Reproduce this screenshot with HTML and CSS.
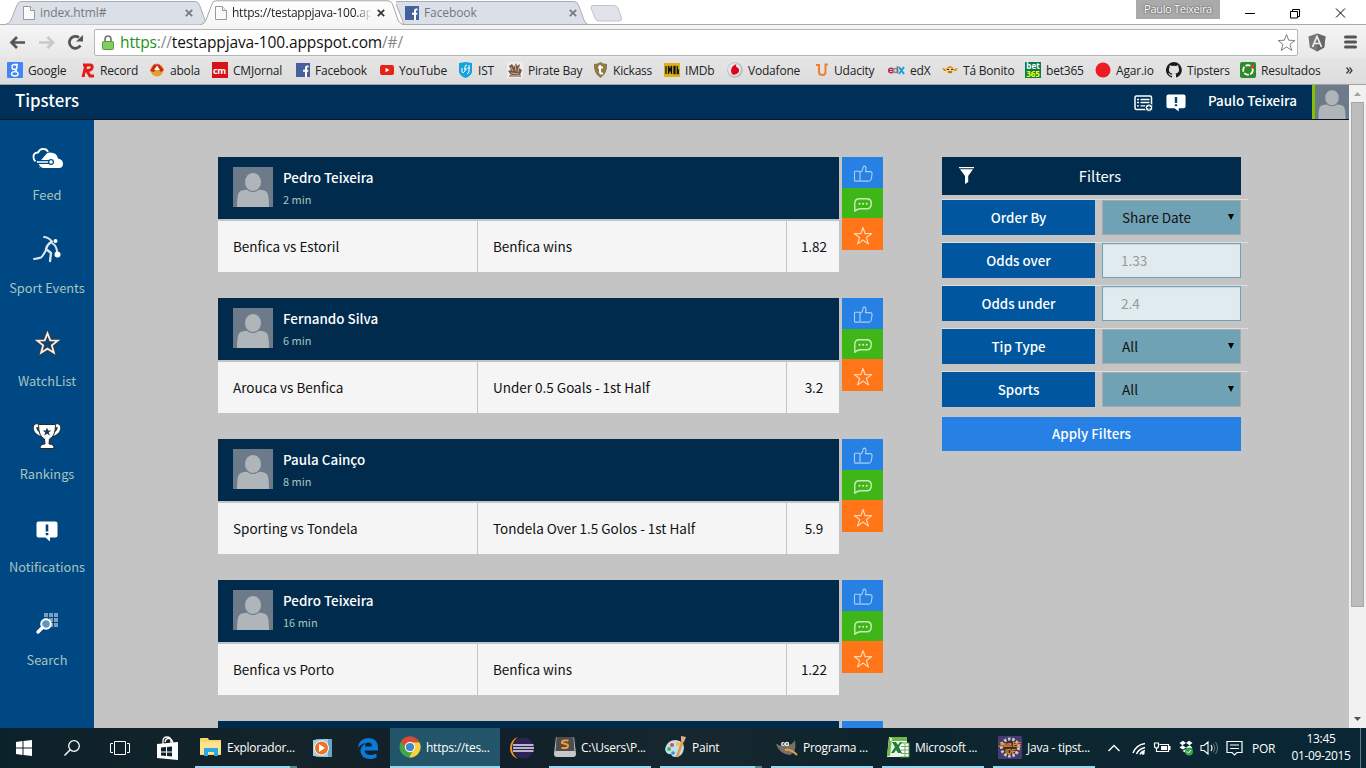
FILE: index.html
```html
<!DOCTYPE html>
<html lang="pt">
<head>
<meta charset="utf-8">
<title>Tipsters</title>
<link rel="stylesheet" href="styles.css">
</head>
<body>
<svg class="defs" width="0" height="0">
  <defs>
    <linearGradient id="activeTab" x2="0" y2="1"><stop offset="0" stop-color="#fff"/><stop offset="1" stop-color="#f6f6f6"/></linearGradient>
    <symbol id="page" viewBox="0 0 12 14"><path d="M.5.5h7l4 4v9H.5z" fill="#fafafa" stroke="#999"/><path d="M7.500.5v4h4" fill="#eee" stroke="#999"/></symbol>
    <symbol id="close" viewBox="0 0 8 8"><path d="M.8.800l6.400 6.400M7.200.800L.8 7.200" stroke="currentColor" stroke-width="1.700"/></symbol>
    <symbol id="fb" viewBox="0 0 14 14"><rect width="14" height="14" fill="#44619d"/><path d="M12.500 3.600h-1.300q-1.200 0-1.200 1.200v9.200M7 7.800h5.300" stroke="#fff" stroke-width="2" fill="none"/></symbol>
    <symbol id="avatar" viewBox="0 0 40 40"><rect width="40" height="40" fill="#6c7a89"/><path d="M4 40q0-12 2-14.500Q8 23 14 22.800q6 4 12 0 6 .2 8 2.700 2 2.500 2 14.500z" fill="#b0b5b9"/><ellipse cx="20" cy="15" rx="8.500" ry="9.500" fill="#b0b5b9" stroke="#6c7a89" stroke-width="1"/></symbol>
    <symbol id="like" viewBox="0 0 20 18"><g fill="none" stroke="#a9cff5" stroke-width="1.100" stroke-linejoin="round"><path d="M1.500 7q0-.8.8-.8H6q1 0 1 .8v8.200q0 .9-1 .9H2.300q-.8 0-.8-.9z"/><path d="M7.200 7.600q2.600-1.500 2.800-4.600 0-1.900 1.200-1.900 1.800 0 1.800 2.400 0 1.500-.6 3.100h5q1.700.2 1.700 2l-.8 5.400q-.4 2-2.400 2.100H7.200"/></g></symbol>
    <symbol id="chat" viewBox="0 0 20 16"><path d="M1.800 14.300V6.200q0-4.500 4.600-4.500h7.300q4.600 0 4.600 4.500 0 5.600-4.600 5.600H7q-2.800.2-5.200 2.500z" fill="none" stroke="#c8edba" stroke-width="1.400" stroke-linejoin="round"/><g fill="#d9f3cf"><circle cx="6.500" cy="6.700" r="1"/><circle cx="10.100" cy="6.700" r="1"/><circle cx="13.700" cy="6.700" r="1"/></g></symbol>
    <symbol id="star" viewBox="0 0 20 20"><path d="M10 1.500l2.100 6.200h6.500l-5.200 3.900 2 6.300L10 14l-5.400 3.900 2-6.300L1.400 7.700h6.500z" fill="none" stroke="currentColor" stroke-width="1.200" stroke-linejoin="round"/></symbol>
    <symbol id="notice" viewBox="0 0 22 21"><path d="M2.500.5h17q2 0 2 2v12q0 2-2 2h-5.500v4l-4.500-4H2.500q-2 0-2-2v-12q0-2 2-2z" fill="#fff"/><path d="M11 3.500v7" stroke="#00407a" stroke-width="2.600"/><rect x="9.700" y="12" width="2.600" height="2.200" fill="#00407a"/></symbol>
  </defs>
</svg>

<header class="browser">
  <div class="tabstrip">
    <div class="tab first">
      <svg class="tab-shape" width="204" height="25" viewBox="0 0 204 25"><path d="M0 24.500Q4.500 24 6 20L12 5Q13.500 1.500 16 1.500H190Q193 1.500 194.500 5L200 20Q201 23.500 204 24.500" fill="#dbe0e8" stroke="#a9acb2"/></svg>
      <div class="tab-body"><svg width="12" height="14"><use href="#page"/></svg><span>index.html#</span><svg class="x" width="8" height="8"><use href="#close"/></svg></div>
    </div>
    <div class="tab active">
      <svg class="tab-shape" width="204" height="25" viewBox="0 0 204 25"><path d="M0 25Q4.500 24 6 20L12 4Q13 .8 16 .8H188Q191 .8 192.500 4L198 20Q200 24 204 25" fill="url(#activeTab)" stroke="#a5a5a5"/></svg>
      <div class="tab-body"><svg width="12" height="14"><use href="#page"/></svg><span>https://testappjava-100.ap</span><svg class="x" width="8" height="8"><use href="#close"/></svg></div>
    </div>
    <div class="tab last">
      <svg class="tab-shape" width="192" height="25" viewBox="0 0 192 25"><path d="M0 1.500H178Q181 1.500 182.500 5L188 20Q189 23.500 192 24.500H8L0 4" fill="#dbe0e8" stroke="#a9acb2"/></svg>
      <div class="tab-body"><svg width="14" height="14"><use href="#fb"/></svg><span>Facebook</span><svg class="x" width="8" height="8"><use href="#close"/></svg></div>
    </div>
    <svg class="newtab" width="34" height="17" viewBox="0 0 34 17"><path d="M4 .5H25Q28 .5 29 3L32.500 13Q33 16 30 16H10Q7 16 6 13L2 3Q1.500.5 4 .5z" fill="#e0e4ea" stroke="#c0c4ca"/></svg>
    <span class="profile">Paulo Teixeira</span>
    <svg class="wincontrols" width="110" height="20" viewBox="0 0 110 20"><g fill="none" stroke="#000"><path d="M5 9.500H15M50.500 7.500h7v6.500h-7zM52.500 7.500v-2h7v7h-2M96 4.500l9 9M105 4.500l-9 9"/></g></svg>
  </div>
  <div class="toolbar">
    <svg class="navbuttons" width="90" height="26" viewBox="0 0 90 26"><path d="M25 13.500H12M17 8l-5.500 5.500L17 19" fill="none" stroke="#555" stroke-width="2.700"/><path d="M39 13.500H52M47.500 8l5.500 5.500-5.500 5.500" fill="none" stroke="#c9c9c9" stroke-width="2.700"/><path d="M80.500 16.500A6 6 0 1 1 79 8.500" fill="none" stroke="#555" stroke-width="2.700"/><path d="M83 6v6.500h-7z" fill="#555"/></svg>
    <div class="omnibox">
      <svg width="12" height="15" viewBox="0 0 12 15"><path d="M3 7V4.500Q3 1 6 1t3 3.500V7" fill="none" stroke="#777" stroke-width="1.700"/><rect x=".5" y="6.500" width="11" height="8" rx="1" fill="#83cc60" stroke="#4e9f3b"/></svg>
      <span class="url"><b>https</b><i>://</i>testappjava-100.appspot.com<i>/#/</i></span>
      <svg class="fav" width="19" height="19" viewBox="0 0 20 20"><path d="M10 1.500l2.300 6.100 6.500.3-5.100 4 1.800 6.400L10 14.700l-5.500 3.600 1.800-6.400-5.100-4 6.500-.3z" fill="#fff" stroke="#777" stroke-linejoin="round"/></svg>
    </div>
    <svg class="ng" width="18" height="19" viewBox="0 0 18 19"><path d="M9 .5l8.500 3-1.300 11L9 18.500l-7.200-4L.5 3.500z" fill="#777"/><path d="M9 .5l8.500 3-1.300 11L9 18.500z" fill="#666"/><path d="M4.500 14L9 3.500l4.500 10.500M6 10.500h6" fill="none" stroke="#eee" stroke-width="1.700"/></svg>
    <svg width="13" height="14" viewBox="0 0 13 14"><path d="M1.500 2h10M1.500 7h10M1.500 12h10" stroke="#555" stroke-width="3" stroke-linecap="round"/></svg>
  </div>
  <nav class="bookmarks">
    <a><svg width="16" height="16" viewBox="0 0 16 16"><rect width="16" height="16" rx="1" fill="#4285f4"/><g fill="none" stroke="#fff" stroke-width="1.400"><ellipse cx="7.500" cy="5" rx="2.500" ry="2.500"/><ellipse cx="7.800" cy="11.800" rx="3.300" ry="2.200"/><path d="M8 2.500h3M8 7.500q2 1 1 2.200"/></g></svg>Google</a>
    <a><svg width="15" height="16" viewBox="0 0 15 16"><path d="M3 3h7q3 0 2 3t-7 2.500M6 3L3 15M7 9l3 5h4" fill="none" stroke="#e51b1b" stroke-width="3"/></svg>Record</a>
    <a><svg width="16" height="16" viewBox="0 0 16 16"><circle cx="8" cy="8" r="6.500" fill="#e5a02b"/><path d="M1 9L5 2.500h5L15 8l-3 2-4-4-3 4z" fill="#d62121"/><path d="M8 3.500L11 8H5z" fill="#fff"/></svg>abola</a>
    <a><svg width="16" height="16" viewBox="0 0 16 16"><rect width="16" height="16" fill="#d7141a"/><text x="1" y="12" class="cm">cm</text></svg>CMJornal</a>
    <a><svg width="14" height="14"><use href="#fb"/></svg>Facebook</a>
    <a><svg width="14" height="10" viewBox="0 0 14 10"><rect width="14" height="10" rx="2" fill="#e62117"/><path d="M5.500 2.700v4.600l4-2.300z" fill="#fff"/></svg>YouTube</a>
    <a><svg width="15" height="16" viewBox="0 0 15 16"><path d="M1 1l6.500-1L14 1v9q-1 4-6.500 6Q2 14 1 10z" fill="#15a4df"/><path d="M4 6v4q1 2 3-1V5q0-2 2-2M6 7h3M11 3v7l-2 2M9.500 6H12" fill="none" stroke="#fff"/></svg>IST</a>
    <a><svg width="16" height="16" viewBox="0 0 16 16"><rect width="16" height="16" fill="#eee"/><path d="M2 4l3-2 2 3 2-4 1 3 3-2-1 4 3 2-2 5H4L1 9l3-1z" fill="#7a5640"/><path d="M4 5l2 4M8 3l1 6M12 5l-1 5M4 11l8 1" stroke="#c7ad93"/><path d="M2 14h12" stroke="#67422d"/></svg>Pirate Bay</a>
    <a><svg width="15" height="16" viewBox="0 0 15 16"><path d="M1 2q4 0 6.500-2Q10 2 14 2q1 9-6.500 14Q0 11 1 2z" fill="#8f7a48"/><path d="M7 3v7q0 2 3 1.500M5 5.500h5" stroke="#fff" stroke-width="2" fill="none"/></svg>Kickass</a>
    <a><svg width="16" height="14" viewBox="0 0 16 14"><rect width="16" height="14" rx="1" fill="#d9b213"/><path d="M2 3v8M4.500 11V3L6 8l1.500-5v8M10 3.500h1v7h-1zM13.300 3v7.500h1V7h-1" fill="none" stroke="#111" stroke-width="1.300"/></svg>IMDb</a>
    <a><svg width="16" height="16" viewBox="0 0 16 16"><circle cx="8" cy="8" r="7.800" fill="#b8bcc0"/><circle cx="7.500" cy="7.500" r="6.500" fill="#e6e7e8"/><path d="M9.500 2q-1.500 1.500 0 3 3 1.500 2.500 4T8 12.500 4 9Q4 4 9.500 2z" fill="#e3001b"/></svg>Vodafone</a>
    <a><svg width="14" height="14" viewBox="0 0 14 14"><path d="M1 2h3v7q0 3 3.500 3 3 0 3-3V1.500h2.500" fill="none" stroke="#f0802b" stroke-width="2"/></svg>Udacity</a>
    <a><svg width="17" height="10" viewBox="0 0 17 10"><circle cx="3" cy="5.500" r="2.300" fill="none" stroke="#b52a67" stroke-width="1.600"/><path d="M1 5.500h4" stroke="#b52a67"/><circle cx="7.500" cy="5.500" r="2" fill="none" stroke="#8f8b8b" stroke-width="1.500"/><path d="M9.500 1v7.500" stroke="#777" stroke-width="1.500"/><path d="M11 2l5 7M16 2l-5 7" stroke="#1b9cdb" stroke-width="2"/></svg>edX</a>
    <a><svg width="16" height="12" viewBox="0 0 16 12"><path d="M0 4l4 1q4-6 8 0l4-1-2 3h-2q-4 6-8 0H2z" fill="#e18a24"/><ellipse cx="8" cy="7" rx="4" ry="3" fill="#f7d38c"/><path d="M5 5.500h2M9 5.500h2M6 8h4" stroke="#422"/></svg>Tá Bonito</a>
    <a><span class="bet"><span>bet</span><span class="yellow">365</span></span>bet365</a>
    <a><svg width="16" height="16" viewBox="0 0 16 16"><circle cx="8" cy="8" r="7.500" fill="#ed1c24"/></svg>Agar.io</a>
    <a><svg width="16" height="16" viewBox="0 0 16 16"><path fill="#1b1b1b" d="M8 0a8 8 0 0 0-2.500 15.600c.4.100.5-.2.500-.4v-1.500c-2.200.5-2.700-1-2.700-1-.4-1-.9-1.200-.9-1.200-.7-.5.100-.5.100-.5.800.1 1.200.8 1.200.8.700 1.200 1.900.9 2.300.700.100-.500.300-.9.500-1.100-1.800-.2-3.600-.9-3.600-4 0-.9.300-1.600.8-2.100-.1-.2-.4-1 .1-2.100 0 0 .7-.2 2.200.8a7.700 7.700 0 0 1 4 0c1.500-1 2.200-.8 2.200-.8.4 1.100.2 1.900.1 2.100.5.600.8 1.300.8 2.100 0 3.100-1.900 3.800-3.700 4 .3.200.6.700.6 1.500v2.200c0 .2.100.5.600.4A8 8 0 0 0 8 0z"/></svg>Tipsters</a>
    <a><svg width="16" height="16" viewBox="0 0 16 16"><rect width="16" height="16" rx="2" fill="#2d8a28"/><circle cx="8" cy="8" r="4.800" fill="none" stroke="#fff" stroke-width="1.800" stroke-dasharray="5 1.500"/><path d="M10 6l4-4v5z" fill="#e33"/></svg>Resultados</a>
    <svg class="more" width="7" height="7" viewBox="0 0 7 7"><path d="M.5.5l2.500 3-2.500 3M3.500.5L6 3.500l-2.500 3" fill="none" stroke="#333" stroke-width="1.200"/></svg>
  </nav>
</header>

<div class="viewport">
  <div class="app">
    <header class="topbar">
      <h1>Tipsters</h1>
      <svg class="newspaper" width="19" height="17" viewBox="0 0 19 17"><rect x="1" y="1" width="16.500" height="13.500" rx="1.500" fill="none" stroke="#fff" stroke-width="1.500"/><path d="M3 4.500h2M6.500 4.500h9M3 7.500h2M6.500 7.500h9M3 10.800h2M6.500 10.800h5" stroke="#fff" stroke-width="1.300"/><circle cx="15" cy="12.700" r="3.800" fill="#fff" stroke="#003057"/><path d="M13 12.700h4M15 10.700v4" stroke="#003057" stroke-width="1.300"/></svg>
      <svg class="bell" width="20" height="18" viewBox="0 0 22 21" preserveAspectRatio="none"><use href="#notice"/></svg>
      <span class="me">Paulo Teixeira</span>
      <svg class="photo" width="34" height="34" viewBox="0 0 40 40"><use href="#avatar"/></svg>
    </header>
    <div class="main">
      <nav class="sidebar">
        <a><svg width="31" height="30" viewBox="0 0 31 30"><path d="M8 25q-5-1-5-1 1-8 7-8 1-6 8-6 7 0 8 6 5 1 5 5 0 4.500-4 4.500H12q-4 0-5-4z" fill="#fff" transform="translate(0 -.5)"/><path d="M7 19.500q-5-.3-5.500-5T6 9.500Q8 5.500 12 6q3 .3 4 3" fill="#004884" stroke="#fff" stroke-width="1.800"/><path d="M2.500 19L6 25" stroke="#004884" stroke-width="5"/><path d="M6 19h13" stroke="#004884" stroke-width="4"/><path d="M5 19h12" stroke="#fff" stroke-width="1.500"/><circle cx="19" cy="19" r="3" fill="#004884"/><circle cx="19" cy="19" r="1.800" fill="#fff"/></svg>Feed</a>
        <a><svg class="runner" width="30" height="30" viewBox="0 0 30 30"><g fill="none" stroke="#dce5ef" stroke-linecap="round" stroke-linejoin="round"><path d="M12 3q4 0 8 4.500" stroke-width="2"/><path d="M19 8q-4 3-5 7l5 4-1 8" stroke-width="2.300"/><path d="M14 16q-3 6-5 7.500-3 1-7 1.500" stroke-width="2"/><path d="M20 9q5 3 5 9" stroke-width="2"/></g><circle cx="23.500" cy="7" r="2" fill="#fff"/><circle cx="25.500" cy="20.500" r="3" fill="#fff"/></svg>Sport Events</a>
        <a><svg class="watch" width="25" height="25" viewBox="0 0 20 20"><path d="M10 1.800l2.200 5.700 6 .2-4.700 3.800 1.600 5.900-5.100-3.300-5.100 3.300 1.600-5.900L1.800 7.700l6-.2z" fill="none" stroke="#383838" stroke-width="2.900"/><path d="M10 1.800l2.200 5.700 6 .2-4.700 3.800 1.600 5.900-5.100-3.300-5.100 3.300 1.600-5.900L1.800 7.700l6-.2z" fill="none" stroke="#f3eeee" stroke-width="1.500"/></svg>WatchList</a>
        <a><svg class="cup" width="28" height="30" viewBox="0 0 28 30"><g stroke="#2a2a2a"><path d="M7 4.500Q2 2 2 6q.5 5 7 7M21 4.500q5-2.500 5 1.500-.5 5-7 7" fill="none" stroke-width="4"/><path d="M7 4.500Q2 2 2 6q.5 5 7 7M21 4.500q5-2.500 5 1.500-.5 5-7 7" fill="none" stroke="#fff" stroke-width="2.700"/><path d="M5.500 2.500h17q0 12-6 14.500l-.5 5q5 0 5 4.500H7q0-4.500 5-4.500l-.5-5q-6-2.500-6-14.500z" fill="#fff"/></g><path d="M14 5.500l1.200 3h3l-2.400 2 1 3L14 11.700l-2.800 1.800 1-3-2.400-2h3z" fill="#183b60"/></svg>Rankings</a>
        <a><svg class="note" width="22" height="21"><use href="#notice"/></svg>Notifications</a>
        <a><svg class="find" width="24" height="24" viewBox="0 0 24 24"><g fill="#7ba0bf"><path d="M9 2h4v4H9zM14 2h4v4h-4zM19 2h4v4h-4zM9 7h4v4H9zM14 7h4v4h-4zM19 7h4v4h-4zM14 12h4v4h-4zM19 12h4v4h-4z"/></g><circle cx="11" cy="13" r="4.800" fill="#6295bd" stroke="#fff" stroke-width="2"/><path d="M7.500 16.500L3 21" stroke="#fff" stroke-width="3.300" stroke-linecap="round"/></svg>Search</a>
      </nav>
      <main class="content">
        <section class="feed">
          <article class="tip">
            <div class="card"><div class="author"><svg width="40" height="40"><use href="#avatar"/></svg><div><h2>Pedro Teixeira</h2><time>2 min</time></div></div>
            <div class="bet-row"><span>Benfica vs Estoril</span><span>Benfica wins</span><span>1.82</span></div></div>
            <div class="actions"><i class="like"><svg width="20" height="18"><use href="#like"/></svg></i><i class="chat"><svg width="20" height="16"><use href="#chat"/></svg></i><i class="star"><svg width="20" height="20"><use href="#star"/></svg></i></div>
          </article>
          <article class="tip">
            <div class="card"><div class="author"><svg width="40" height="40"><use href="#avatar"/></svg><div><h2>Fernando Silva</h2><time>6 min</time></div></div>
            <div class="bet-row"><span>Arouca vs Benfica</span><span>Under 0.5 Goals - 1st Half</span><span>3.2</span></div></div>
            <div class="actions"><i class="like"><svg width="20" height="18"><use href="#like"/></svg></i><i class="chat"><svg width="20" height="16"><use href="#chat"/></svg></i><i class="star"><svg width="20" height="20"><use href="#star"/></svg></i></div>
          </article>
          <article class="tip">
            <div class="card"><div class="author"><svg width="40" height="40"><use href="#avatar"/></svg><div><h2>Paula Cainço</h2><time>8 min</time></div></div>
            <div class="bet-row"><span>Sporting vs Tondela</span><span>Tondela Over 1.5 Golos - 1st Half</span><span>5.9</span></div></div>
            <div class="actions"><i class="like"><svg width="20" height="18"><use href="#like"/></svg></i><i class="chat"><svg width="20" height="16"><use href="#chat"/></svg></i><i class="star"><svg width="20" height="20"><use href="#star"/></svg></i></div>
          </article>
          <article class="tip">
            <div class="card"><div class="author"><svg width="40" height="40"><use href="#avatar"/></svg><div><h2>Pedro Teixeira</h2><time>16 min</time></div></div>
            <div class="bet-row"><span>Benfica vs Porto</span><span>Benfica wins</span><span>1.22</span></div></div>
            <div class="actions"><i class="like"><svg width="20" height="18"><use href="#like"/></svg></i><i class="chat"><svg width="20" height="16"><use href="#chat"/></svg></i><i class="star"><svg width="20" height="20"><use href="#star"/></svg></i></div>
          </article>
          <article class="tip">
            <div class="card"><div class="author"></div></div>
            <div class="actions"><i class="like"></i></div>
          </article>
        </section>
        <aside class="filters">
          <h3><svg width="15" height="18" viewBox="0 0 15 18"><path d="M0 0h15v1.200H0zM1 2.200h13L9.200 9v6L6 17V9z" fill="#fff"/></svg><span>Filters</span></h3>
          <div class="filter"><label>Order By</label><div class="select">Share Date<svg width="6" height="6"><path d="M0 0h6L3 6z"/></svg></div></div>
          <div class="filter"><label>Odds over</label><div class="input">1.33</div></div>
          <div class="filter"><label>Odds under</label><div class="input">2.4</div></div>
          <div class="filter"><label>Tip Type</label><div class="select">All<svg width="6" height="6"><path d="M0 0h6L3 6z"/></svg></div></div>
          <div class="filter"><label>Sports</label><div class="select">All<svg width="6" height="6"><path d="M0 0h6L3 6z"/></svg></div></div>
          <div class="apply">Apply Filters</div>
        </aside>
      </main>
    </div>
  </div>
  <div class="scrollbar"><svg width="7" height="4"><path d="M0 4l3.500-4L7 4z" fill="#a3a3a3"/></svg><div class="thumb"></div><svg width="7" height="4"><path d="M0 0l3.500 4L7 0z" fill="#505050"/></svg></div>
</div>

<footer class="taskbar">
  <div class="pin"><svg width="16" height="16" viewBox="0 0 16 16"><path d="M0 2l6.500-1v6.500H0zM7.500.9L16 0v7.500H7.500zM0 8.500h6.500V15L0 14zM7.500 8.500H16V16l-8.500-1z" fill="#fff"/></svg></div>
  <div class="pin"><svg width="16" height="16" viewBox="0 0 16 16"><circle cx="10" cy="6" r="5.300" fill="none" stroke="#fff" stroke-width="1.300"/><path d="M6 10l-5.500 5.500" stroke="#fff" stroke-width="1.400"/></svg></div>
  <div class="pin"><svg width="20" height="14" viewBox="0 0 20 14"><path d="M4.500.5h11v13h-11zM3 2.500H.5v9H3M17 2.500h2.500v9H17" fill="none" stroke="#fff"/></svg></div>
  <div class="pin store"><svg width="22" height="24" viewBox="0 0 22 24"><path d="M6 9V5q0-4 4-4t4 4v4M8 6q1-4 4-3.500T16 7" fill="none" stroke="#fff" stroke-width="1.300"/><path d="M0 8l21-2v18L0 22z" fill="#fff"/><path d="M4 11.500l5-.4v4.400H4zM10 11l5-.5v5h-5zM4 16.500h5V20l-5-.4zM10 16.500h5v4l-5-.5z" fill="#0d222b"/></svg></div>
  <div class="task multi"><svg width="22" height="20" viewBox="0 0 22 20"><path d="M0 2q0-1 1-1h7l1 2h12v15H0z" fill="#f6d873"/><path d="M0 5h21v12H0z" fill="#fbe38f"/><path d="M4 19v-8h14v8h-4v-4H8v4z" fill="#29a9e1"/></svg>Explorador...</div>
  <div class="pin media"><svg width="20" height="20" viewBox="0 0 20 20"><path d="M3 1h16v18H3z" fill="#6aa5c5"/><path d="M0 2l15-1v18L0 18z" fill="#a4cfe3"/><circle cx="8.500" cy="10" r="7" fill="#ed7423" stroke="#fff"/><path d="M6 6v8l6-4z" fill="#fff"/></svg></div>
  <div class="pin"><svg width="20" height="21" viewBox="0 0 20 21"><path d="M0 10Q1 0 10.500 0 20 .5 20 10v2.500H6.500q.5 4.500 6 4.500 3 0 6-1.500v4Q15 21 11.500 21 3 20.500 2.500 13 2.500 8 8 5 3 5.500 0 10zM7 8.500h7q0-4-3.500-4T7 8.500z" fill="#0b7bdb"/></svg></div>
  <div class="task current"><svg width="22" height="22" viewBox="0 0 22 22"><circle cx="11" cy="11" r="10.500" fill="#45a444"/><path d="M2 5.500A10.500 10.500 0 0 1 20.500 6.500H11L7 13z" fill="#df4835"/><path d="M20.500 6.500A10.500 10.500 0 0 1 10 21.500L15 13 12 6.500z" fill="#fbd13f"/><circle cx="11" cy="11" r="4.700" fill="#4285ca" stroke="#f3f3f3" stroke-width="1.200"/></svg>https://tes...</div>
  <div class="pin eclipse"><svg width="24" height="22" viewBox="0 0 24 22"><path d="M8 0Q0 3 0 11t8 11Q2 17 2 11T8 0z" fill="#f79424"/><circle cx="13.500" cy="11" r="10.500" fill="#2d2357"/><path d="M3 8h20.500M3 11h21M3 14h20.500" stroke="#e8e6f2" stroke-width="1.600"/></svg></div>
  <div class="task"><svg width="22" height="20" viewBox="0 0 22 20"><path d="M2 0h18l2 17q0 3-3 3H3q-3 0-3-3z" fill="#c8c8c8"/><path d="M2.500 0h17l1 14h-19z" fill="#4d4d4d"/><path d="M14.500 3.500H10Q7.500 4 8 6l5.500 1.500Q15 10 12 11H7.500" fill="none" stroke="#f59c34" stroke-width="2"/></svg>C:\Users\P...</div>
  <div class="task multi paint"><svg width="23" height="22" viewBox="0 0 23 22"><path d="M1 13Q3 4 12 4q8 1 8 8-1 9-9 9-3 0-4-3-5 1-6-5z" fill="#bde0f0"/><circle cx="8" cy="9" r="2" fill="#e44"/><circle cx="5" cy="13" r="2" fill="#4b4"/><circle cx="14" cy="8" r="2" fill="#fb3"/><circle cx="9" cy="17" r="1.800" fill="#48c"/><path d="M19 4L13 21" stroke="#e09a43" stroke-width="2.500"/><path d="M17 0l5 1-2 5-3-1z" fill="#d9b184"/></svg>Paint</div>
  <div class="task gimp"><svg width="22" height="18" viewBox="0 0 22 18"><path d="M1 6q4 3 7 0 7 3 11-4 2 13-5 15Q3 16 0 6z" fill="#777066"/><circle cx="7" cy="6" r="2" fill="#eee"/><circle cx="11" cy="6" r="2.200" fill="#eee"/><circle cx="7.300" cy="6" r=".8"/><circle cx="11" cy="6" r=".8"/><path d="M9 12q6-1 12 5" fill="none" stroke="#e59b48" stroke-width="2"/></svg>Programa ...</div>
  <div class="task excel"><svg width="23" height="22" viewBox="0 0 23 22"><path d="M2 1h18v20H0z" fill="#e9f4e5"/><path d="M3 1h17v4H3zM2 2L0 20h3L5 2z" fill="#73b64b"/><path d="M13 7h9v14h-9" fill="#fff" stroke="#4f9b45"/><path d="M14 10.500h8M14 14h8M14 17.500h8M18 8v13" stroke="#68aa5e"/><path d="M5 6h4l2 3 2-3h2l-3 5 3 6h-4l-2-3-2 3H4l4-6z" fill="#237c35"/></svg>Microsoft ...</div>
  <div class="task java"><svg width="24" height="23" viewBox="0 0 24 23"><rect width="24" height="23" rx="1" fill="#493a70"/><circle cx="12" cy="11.500" r="8.500" fill="#333" stroke="#ccc" stroke-width="3" stroke-dasharray="2.500 1.700"/><text x="0" y="11" class="ide" textLength="23">Java EE</text><text x="7" y="18" class="ide">IDE</text></svg>Java - tipst...</div>
  <div class="tray">
    <svg width="150" height="24" viewBox="1100 736 150 24"><g fill="none" stroke="#fff" stroke-width="1.400"><path d="M1108.500 751l5.500-5.500 5.500 5.500"/><path d="M1133 753q3-8 12-9.500M1136.500 754q2-5 8.500-6.500M1140 754.500q1-3 5-4" stroke-width="1.500"/><path d="M1159.500 744.500h9v7h-9M1154.500 743v3q0 2 2 2t2-2v-3zM1156.500 748v3.500h3" stroke-width="1.200"/><path d="M1204 745.500h-3v5h3l4 3.500v-12zM1211 745q2 3 0 6" stroke-width="1.100"/><path d="M1227 741.500h15v11h-5l-2.500 2.500-2.500-2.500h-5zM1230 745h9M1230 748.500h9" stroke-width="1.200"/></g><g fill="#fff"><circle cx="1143" cy="753" r="1.700"/><path d="M1161 746h6v4h-6zM1169 746h1.500v4h-1.500zM1179.500 743l3.500-2.200 3 2.200-3.500 2.200zM1186 743l3-2.200 3.500 2.200-3 2.200zM1179.500 747.400l3-2.200 3.500 2.200-3 2.200zM1186 747.400l3.500-2.200 3 2.200-3.500 2.200zM1182.500 751l3.500-2 3 2-3 2z"/></g><path d="M1213 743.500q3.500 4.500 0 9M1215.500 742q4 6 0 12" fill="none" stroke="#6a7b82"/><circle cx="1189" cy="751.500" r="4" fill="#31a64a"/><path d="M1187 751.500l1.500 1.500 2.500-3" fill="none" stroke="#fff"/></svg>
    <span class="lang">POR</span>
    <span class="clock"><span>13:45</span><span>01-09-2015</span></span>
    <span class="peek"></span>
  </div>
</footer>
</body>
</html>
```
FILE: styles.css
```css
* { box-sizing: border-box; }
body { margin: 0; width: 1366px; height: 768px; overflow: hidden; display: flex; flex-direction: column; background: #fff; font-family: "Noto Sans CJK JP", "Noto Sans", sans-serif; }
.defs { position: absolute; }
svg { display: block; flex: none; }
h1, h2, h3 { margin: 0; font-weight: 500; }
i { font-style: normal; }

/* browser chrome */
.browser { height: 85px; flex: none; font-family: "Open Sans", "Noto Sans", sans-serif; border-bottom: 1px solid #a2a2a2; }
.tabstrip { height: 25px; display: flex; align-items: flex-start; padding-left: 5px; background: #fff; border-bottom: 1px solid #a9a9a9; }
.tab { display: grid; grid-template-columns: 100%; width: 204px; height: 25px; margin-right: -9px; flex: none; color: #777; font-size: 12px; }
.tab > * { grid-area: 1 / 1; }
.tab.active { z-index: 1; color: #222; margin-right: -8px; }
.tab.last { width: 192px; }
.tab-body { display: flex; align-items: center; padding: 0 16px 0 18px; height: 25px; gap: 5px; z-index: 1; }
.tab.active .tab-body { padding-left: 15px; padding-right: 19px; }
.tab.last .tab-body { padding-left: 9px; padding-right: 11px; }
.tab-body span { flex: 1; overflow: hidden; white-space: nowrap; letter-spacing: -.1px; }
.tab.active span { -webkit-mask-image: linear-gradient(90deg, #000 88%, transparent); mask-image: linear-gradient(90deg, #000 88%, transparent); letter-spacing: -.25px; }
.tab.active .x { color: #333; }
.newtab { margin: 5px 0 0 9px; }
.tab.last + .newtab { margin-left: 10px; }
.profile { margin-left: auto; width: 84px; height: 19px; background: #aaa; color: #fff; font-size: 11px; line-height: 18px; text-align: center; letter-spacing: -.3px; text-shadow: 0 0 2px #222; }
.wincontrols { margin: 4px 16px 0 20px; }
.toolbar { height: 33px; display: flex; align-items: center; padding: 0 9px 0 3px; background: linear-gradient(#f5f5f5, #e8e8e8); }
.navbuttons { margin-left: -3px; margin-right: 4px; }
.omnibox { width: 1205px; height: 27px; margin-top: 2px; display: flex; align-items: center; padding: 0 1px 0 7px; border: 1px solid #b5b5b5; border-radius: 2px; background: #fff; }
.url { margin: -1px 0 0 6px; flex: 1; font-size: 15.500px; letter-spacing: -.13px; color: #111; }
.url b { font-weight: 400; color: #1c9320; }
.url i { color: #888; }
.ng { margin: 2px 18px 0 10px; }
.bookmarks { height: 26px; display: grid; align-items: center; padding: 0 0 2px 7px; background: linear-gradient(#e5e5e5, #dcdcdc); grid-template-columns: 73px 69px 63px 84px 84px 78px 49px 86px 71px 63px 88px 73px 54px 83px 70px 71px 74px 106px 20px; }
.bookmarks a { display: flex; align-items: center; gap: 5px; font-size: 12px; letter-spacing: -.2px; color: #222; white-space: nowrap; }
.cm { font: bold 9px "Open Sans", sans-serif; fill: #fff; letter-spacing: -.5px; }
.bet { width: 16px; height: 16px; display: grid; grid-template-rows: 8px 8px; justify-items: center; background: #087c50; color: #fff; font-size: 8px; font-weight: 700; line-height: 8px; letter-spacing: 0; }
.bet .yellow { color: #ff0; }

/* page */
.viewport { flex: 1; min-height: 0; display: flex; }
.app { width: 1349px; display: flex; flex-direction: column; min-height: 0; }
.topbar { height: 35px; flex: none; display: flex; align-items: center; background: #003057; border-bottom: 1px solid #091520; color: #fff; }
.topbar h1 { flex: 1; padding-left: 15px; font-size: 16.800px; font-weight: 500; line-height: 30px; margin-top: -4px; }
.newspaper { margin-right: 13px; margin-top: 2px; }
.bell { margin-right: 22px; margin-top: 2px; }
.me { width: 104px; font-size: 13.400px; font-weight: 500; line-height: 30px; margin-top: -4px; white-space: nowrap; }
.photo { width: 37px; border-left: 3px solid #86c000; background: #6c7a89; }
.main { flex: 1; min-height: 0; display: flex; }
.sidebar { width: 94px; background: #004884; flex: none; padding-top: 16px; }
.sidebar a { height: 93px; display: grid; grid-template-rows: 47px 24px; justify-items: center; align-items: center; color: #a8c5bd; font-size: 12.800px; line-height: 24px; white-space: nowrap; }
.sidebar svg { margin-bottom: 4px; }
.sidebar .runner { margin-bottom: 7px; }
.sidebar .note { margin-bottom: 1px; }
.content { flex: 1; min-height: 0; overflow: hidden; display: flex; gap: 59px; align-items: flex-start; padding: 37px 0 0 124px; background: #c4c4c4; }
.feed { width: 665px; }
.tip { display: flex; gap: 3px; height: 115px; margin-bottom: 26px; align-items: flex-start; }
.card { width: 621px; }
.author { height: 62px; display: flex; padding: 10px 15px; gap: 10px; background: #002b4d; color: #fff; }
.author h2 { margin-top: -1px; font-size: 13.400px; line-height: 22px; }
.author time { display: block; font-size: 11px; line-height: 22px; color: #a8c5bd; }
.bet-row { margin-top: 2px; height: 51px; display: grid; grid-template-columns: 259px 308px 52px; gap: 1px; }
.bet-row span { background: #f5f5f5; font-size: 13.500px; line-height: 51px; padding-left: 15px; color: #111; white-space: nowrap; }
.bet-row span:last-child { padding: 0 0 0 1px; text-align: center; }
.bet-row span:last-child { padding-left: 2px; }
.actions i { width: 41px; display: grid; place-items: center; padding-top: 3px; }
.actions .like { height: 31px; background: #2780e3; }
.actions .chat { height: 30px; background: #3fb618; }
.actions .star { height: 32px; background: #ff7518; color: #ffd6b3; }
.filters { width: 306px; font-size: 13.300px; font-weight: 500; }
.filters h3 { width: 299px; height: 38px; margin-bottom: 4px; display: grid; grid-template-columns: 17px 15px 252px; align-items: center; background: #002b4d; color: #fff; font-size: 14.700px; font-weight: 400; line-height: 20px; text-align: center; padding-bottom: 1px; }
.filters h3 svg { grid-column: 2; }
.filter { height: 36px; margin-bottom: 7px; border-top: 1px solid #dedede; display: flex; gap: 7px; }
.filter label { width: 153px; background: #00579f; color: #fff; text-align: center; line-height: 35px; }
.select, .input { width: 139px; border: 1px solid #a9a9a9; background: #70a2b5; line-height: 33px; padding-left: 19px; font-size: 13.600px; font-weight: 400; color: #111; }
.select { display: flex; justify-content: space-between; padding-right: 6px; }
.select svg { margin-top: 13px; }
.input { background: #e0ebf0; border-color: #70a2b5; padding-left: 18px; color: #999; box-shadow: inset 0 1px 1px #ccd8dd; }
.apply { width: 299px; height: 34px; margin-top: 10px; background: #2780e3; color: #fff; text-align: center; line-height: 33px; }
.scrollbar { width: 17px; background: #f1f1f1; display: flex; flex-direction: column; align-items: center; padding: 7px 0; }
.thumb { width: 13px; height: 505px; margin: 6px 0 auto; background: #bcbcbc; border: 1px solid #a8a8a8; }

/* taskbar */
.taskbar { height: 40px; flex: none; display: grid; grid-template-columns: 48px 48px 48px 51px 102px 48px 45px 110px 49px 111px 111px 111px 111px 102px 271px; background: linear-gradient(90deg, #0c222b, #15232a 20%, #101f29 35%, #17272f 50%, #0d242d 65%, #0d2731 80%, #082635); color: #fff; font: 12px "Open Sans", "Noto Sans", sans-serif; }
.pin { display: grid; place-items: center; }
.store { padding-right: 3px; }
.media { padding-left: 3px; }
.eclipse { padding-right: 5px; }
.task { width: 102px; height: 40px; display: flex; align-items: center; gap: 5px; padding-left: 5px; white-space: nowrap; letter-spacing: -.25px; border-bottom: 2px solid #98d6ee; }
.multi { border-image: linear-gradient(90deg, #98d6ee 92%, #5e8494 92%) 1; border-width: 0 0 2px; border-style: solid; }
.paint { padding-left: 4px; }
.task.current { width: 110px; padding-left: 9px; background: #23556a; }
.ide { font: bold 7px "Liberation Sans", sans-serif; fill: #f18a32; letter-spacing: -.2px; }
.tray { display: flex; align-items: center; padding-left: 5px; }
.lang { width: 27px; margin-left: 2px; font-size: 12px; letter-spacing: -.3px; }
.clock { width: 78px; margin: -2px 0 0 3px; display: grid; text-align: center; line-height: 17px; letter-spacing: -.35px; }
.peek { width: 1px; height: 40px; background: #667980; }
```
